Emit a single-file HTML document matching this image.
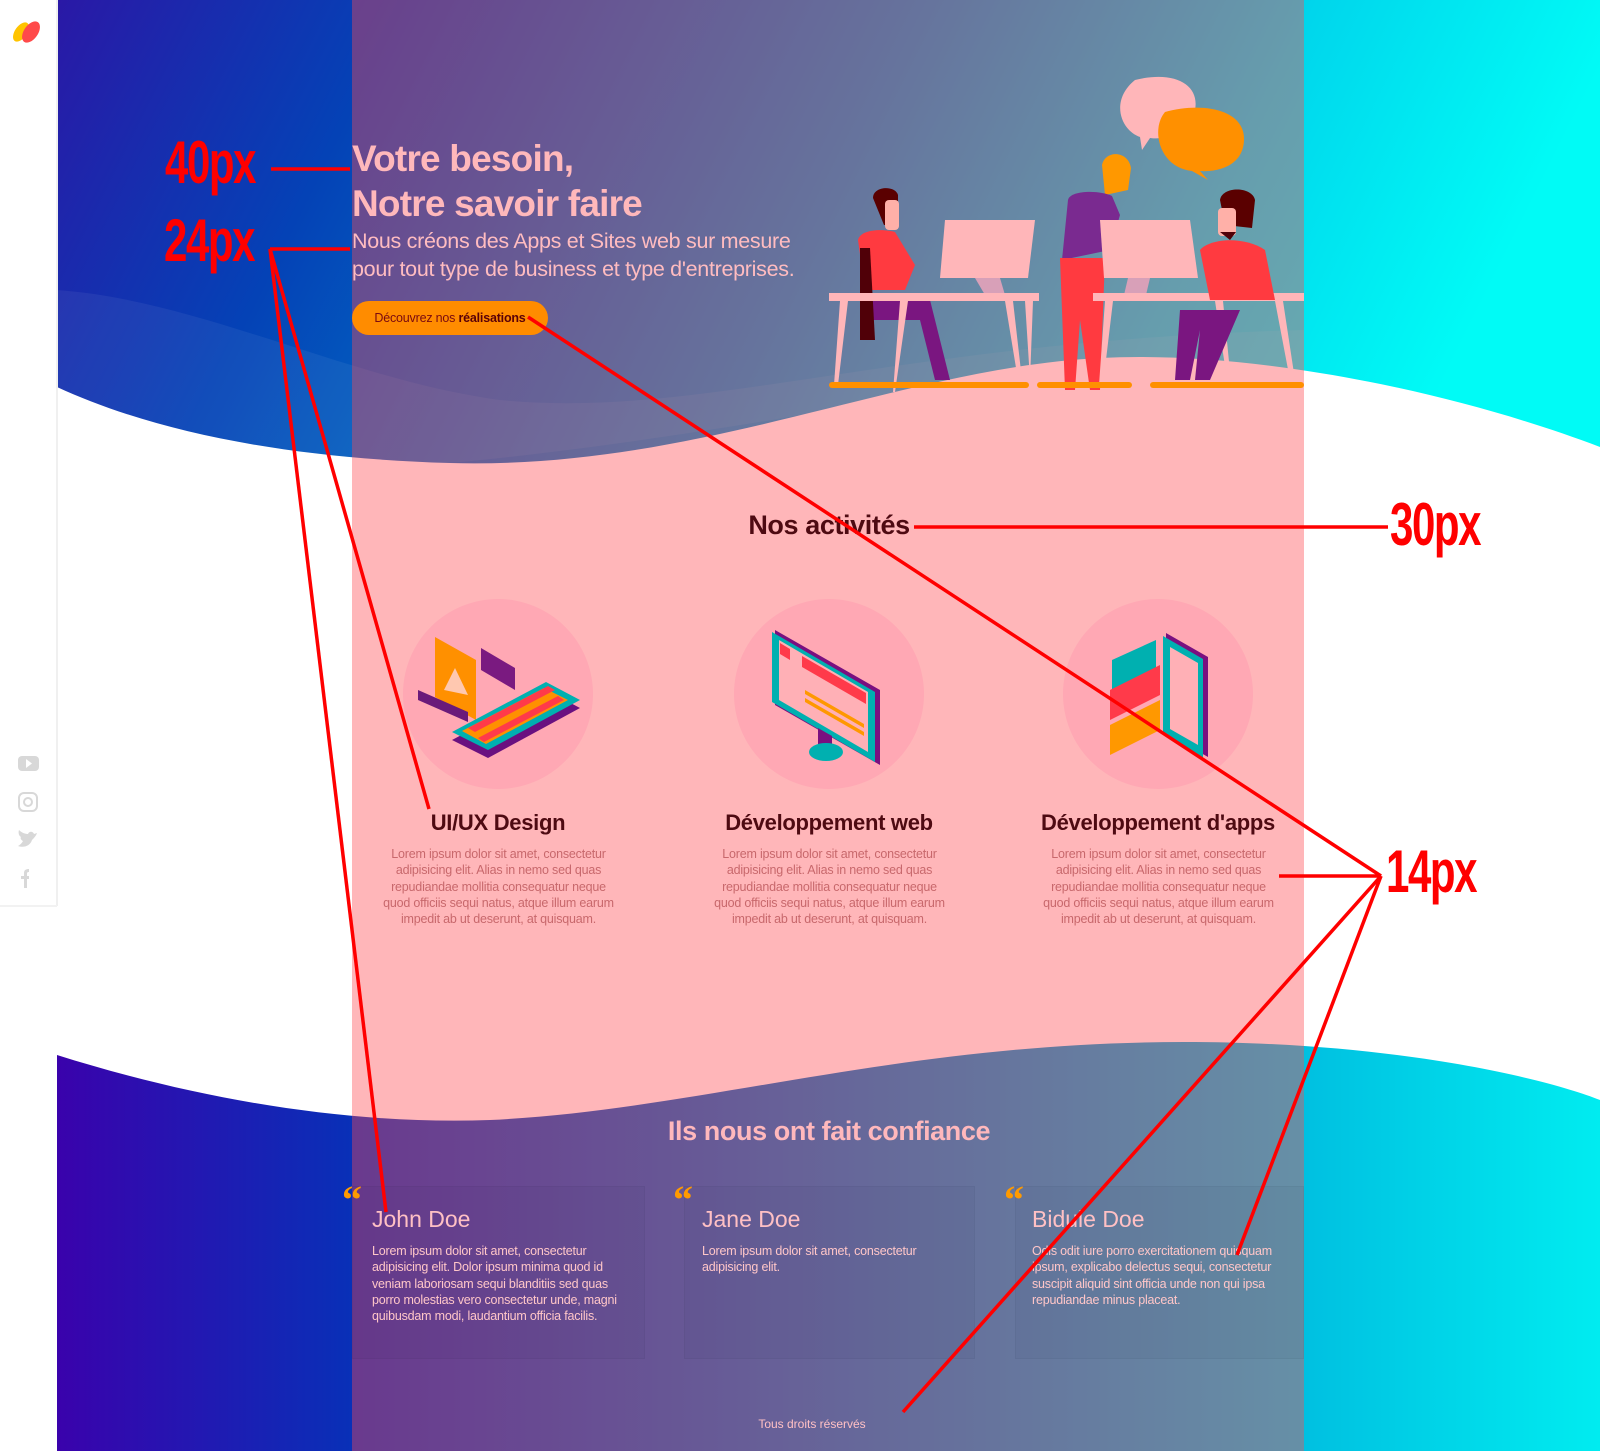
<!DOCTYPE html>
<html><head><meta charset="utf-8"><style>
*{margin:0;padding:0;box-sizing:border-box}
body{width:1600px;height:1451px;position:relative;overflow:hidden;background:#fff;font-family:"Liberation Sans",sans-serif}
.a{position:absolute}
.t{position:absolute;white-space:nowrap}
.desc{position:absolute;width:245px;text-align:center;font-size:12.5px;line-height:16.3px;color:#c8686c;letter-spacing:-0.2px}
.h3{position:absolute;width:330px;text-align:center;font-size:22px;font-weight:bold;color:#4e0a12;letter-spacing:-0.3px}
.card{position:absolute;top:1186px;height:173px;background:rgba(0,0,20,0.03);border:1px solid rgba(0,0,0,0.03)}
.q{position:absolute;top:1176px;font-size:40px;font-family:"Liberation Serif",serif;color:#ff9a00;font-weight:bold}
.nm{position:absolute;top:1206px;font-size:23px;color:#ffc0c4;font-weight:300}
.ct{position:absolute;top:1243px;font-size:12.5px;line-height:16.3px;color:#ffc6c8;letter-spacing:-0.2px}
.ann{position:absolute;color:#f00;font-weight:bold;font-size:60px;transform:scaleX(0.7);transform-origin:left top;letter-spacing:-2px;white-space:nowrap}
</style></head><body>

<svg class="a" style="left:0;top:0" width="1600" height="1451" viewBox="0 0 1600 1451">
<defs>
<linearGradient id="g1" x1="0" y1="0" x2="1" y2="0.15">
<stop offset="0" stop-color="#2a18a6"/><stop offset="0.22" stop-color="#0442b6"/><stop offset="0.55" stop-color="#0090d0"/><stop offset="0.8" stop-color="#00d6ec"/><stop offset="1" stop-color="#00fbf6"/></linearGradient>
<linearGradient id="g2" x1="0" y1="0" x2="1" y2="0">
<stop offset="0" stop-color="#3a02ac"/><stop offset="0.2" stop-color="#0632b8"/><stop offset="0.6" stop-color="#0090d0"/><stop offset="1" stop-color="#00ecf0"/></linearGradient>
</defs>
<path d="M57,0 H1600 V447 C1450,390 1250,350 1100,358 C900,368 700,470 450,463 C280,458 150,430 57,387 Z" fill="url(#g1)"/>
<path d="M57,290 C200,300 350,380 500,400 C700,420 900,340 1304,330 L1304,370 C1000,360 800,430 450,463 C280,458 150,430 57,387 Z" fill="#fff" opacity="0.06"/>
<path d="M57,1055 C200,1100 350,1125 490,1120 C700,1110 900,1042 1184,1042 C1400,1042 1550,1080 1600,1100 V1451 H57 Z" fill="url(#g2)"/>
<rect x="352" y="0" width="952" height="1451" fill="rgb(255,72,80)" opacity="0.4"/>
<rect x="0" y="0" width="57" height="906" fill="#fff"/>
<rect x="56" y="0" width="2" height="906" fill="#f0f0f0"/>
<rect x="0" y="905" width="57" height="2" fill="#f2f2f2"/>
<ellipse cx="21" cy="32" rx="6" ry="11" transform="rotate(35 21 32)" fill="#ffc400"/>
<ellipse cx="31" cy="32" rx="7" ry="12" transform="rotate(35 31 32)" fill="#ff4a4a"/>
<rect x="18" y="756" width="21" height="15" rx="4" fill="#d8d8d8"/><path d="M26,759 L32,763.5 L26,768 Z" fill="#fff"/>
<rect x="19" y="793" width="18" height="18" rx="5" fill="none" stroke="#d8d8d8" stroke-width="2"/><circle cx="28" cy="802" r="4" fill="none" stroke="#d8d8d8" stroke-width="2"/>
<path d="M18,846 C24,848 30,846 32,840 C34,838 36,836 37,833 L34,834 C33,831 29,831 28,834 C24,834 21,832 19,830 C18,833 19,836 21,837 C20,838 21,840 23,841 C22,843 20,845 18,846 Z" fill="#d8d8d8"/>
<path d="M24,888 V879 H21 V876 H24 V873 C24,870 26,869 29,869 V872 C27,872 27,873 27,874 V876 H29 L29,879 H27 V888 Z" fill="#d8d8d8"/>
<circle cx="498" cy="694" r="95" fill="#ffa8b4"/>
<circle cx="829" cy="694" r="95" fill="#ffa8b4"/>
<circle cx="1158" cy="694" r="95" fill="#ffa8b4"/>
<path d="M435,637 L476,660 L476,720 L435,697 Z" fill="#ff9000"/>
<path d="M444,690 L455,668 L468,695 Z" fill="#ffc8b0"/>
<path d="M481,648 L515,668 L515,690 L481,670 Z" fill="#7a1a80"/>
<path d="M418,690 L468,712 L468,722 L418,700 Z" fill="#6a1a7a"/>
<path d="M452,740 L546,690 L580,708 L488,758 Z" fill="#6a1080"/>
<path d="M452,732 L546,682 L580,700 L488,750 Z" fill="#00b0b0"/>
<path d="M462,731 L544,688 L568,700 L486,744 Z" fill="#ff9000"/>
<path d="M468,728 L548,686 L555,690 L475,732 Z M478,738 L558,696 L564,700 L484,742 Z" fill="#ff3a4a"/>
<path d="M775,630 L880,690 L880,765 L775,705 Z" fill="#7a1080"/>
<path d="M772,632 L875,692 L875,762 L772,702 Z" fill="#00b0b0"/>
<path d="M779,640 L868,692 L868,752 L779,700 Z" fill="#ffb0b6"/>
<path d="M780,643 L790,649 L790,660 L780,654 Z M802,656 L866,693 L866,704 L802,667 Z" fill="#ff3a4a"/>
<path d="M805,690 L864,724 L864,728 L805,694 Z M805,698 L864,732 L864,736 L805,702 Z" fill="#ff9800"/>
<path d="M818,728 L832,736 L832,752 L818,744 Z" fill="#7a1080"/>
<ellipse cx="826" cy="752" rx="17" ry="9" fill="#00b0b0"/>
<path d="M1166,633 L1208,657 L1208,757 L1166,733 Z" fill="#7a1080"/>
<path d="M1163,636 L1203,659 L1203,758 L1163,735 Z" fill="#00b0b0"/>
<path d="M1170,647 L1198,663 L1198,745 L1170,729 Z" fill="#ffb0b6"/>
<path d="M1112,660 L1156,640 L1156,668 L1112,690 Z" fill="#00b0b0"/>
<path d="M1110,690 L1160,665 L1160,695 L1110,720 Z" fill="#ff3a4a"/>
<path d="M1110,725 L1160,700 L1160,730 L1110,755 Z" fill="#ff9800"/>
<path d="M1135,80 C1175,70 1200,85 1195,110 C1190,135 1160,140 1150,138 L1142,150 L1140,137 C1120,130 1110,100 1135,80 Z" fill="#ffb6b9"/>
<path d="M1165,112 C1200,102 1245,108 1244,140 C1243,170 1210,172 1200,171 L1208,180 L1192,171 C1160,168 1150,130 1165,112 Z" fill="#ff9000"/>
<path d="M873,198 C873,186 895,185 898,195 L898,225 L884,225 Z" fill="#5a0000"/>
<rect x="885" y="200" width="14" height="30" rx="4" fill="#ffb0a8"/>
<path d="M858,240 C860,230 880,228 895,232 L915,265 L905,290 L865,290 Z" fill="#ff3a40"/>
<path d="M864,300 L930,300 L950,380 L935,380 L920,320 L870,320 Z" fill="#7a1680"/>
<path d="M860,248 L870,248 L875,340 L860,340 Z" fill="#500008"/>
<path d="M945,220 L1035,220 L1028,278 L940,278 Z" fill="#ffb6b9"/>
<path d="M975,278 L1000,278 L1005,295 L985,295 Z" fill="#d8a0b8"/>
<rect x="829" y="293" width="210" height="8" fill="#ffb6b9"/>
<path d="M840,301 L848,301 L838,385 L834,385 Z M1005,301 L1013,301 L1022,380 L1018,380 Z M900,301 L908,301 L895,392 L893,392 Z M1025,301 L1033,301 L1030,380 Z" fill="#ffb6b9"/>
<path d="M1102,165 C1105,150 1128,150 1131,168 L1128,190 L1105,195 Z" fill="#ff9800"/>
<path d="M1068,200 C1070,190 1100,190 1112,196 L1120,215 L1110,250 L1062,260 Z" fill="#7a2a90"/>
<path d="M1060,258 L1105,258 L1100,390 L1090,390 L1080,320 L1075,390 L1065,390 Z" fill="#ff3a40"/>
<path d="M1100,220 L1190,220 L1198,278 L1104,278 Z" fill="#ffb6b9"/>
<path d="M1128,278 L1150,278 L1146,295 L1124,295 Z" fill="#d8a0b8"/>
<rect x="1093" y="293" width="211" height="8" fill="#ffb6b9"/>
<path d="M1105,301 L1113,301 L1103,385 L1099,385 Z M1275,301 L1283,301 L1295,380 L1290,380 Z M1215,301 L1223,301 L1232,392 L1229,392 Z" fill="#ffb6b9"/>
<path d="M1220,200 C1222,186 1252,186 1255,200 L1252,228 L1225,225 Z" fill="#5a0000"/>
<rect x="1218" y="208" width="18" height="28" rx="4" fill="#ffb0a8"/>
<path d="M1220,232 L1236,232 L1230,240 Z" fill="#500008"/>
<path d="M1200,250 C1210,238 1245,236 1265,250 L1275,300 L1210,300 Z" fill="#ff3a40"/>
<path d="M1180,310 L1240,310 L1210,380 L1195,380 L1200,330 L1190,380 L1175,380 Z" fill="#7a1680"/>
<rect x="829" y="382" width="200" height="6" rx="3" fill="#ff9000"/>
<rect x="1037" y="382" width="95" height="6" rx="3" fill="#ff9000"/>
<rect x="1150" y="382" width="154" height="6" rx="3" fill="#ff9000"/>
</svg>

<div class="t" style="left:352px;top:136px;font-size:37px;font-weight:bold;color:#ffb8bb;line-height:45px;letter-spacing:-0.8px">Votre besoin,<br>Notre savoir faire</div>
<div class="t" style="left:352px;top:227px;font-size:21.5px;color:#ffbcc0;line-height:28px;letter-spacing:-0.3px">Nous créons des Apps et Sites web sur mesure<br>pour tout type de business et type d'entreprises.</div>
<div class="a" style="left:352px;top:301px;width:196px;height:34px;border-radius:17px;background:#ff8c00;color:#7a0a10;font-size:12.5px;line-height:34px;text-align:center;letter-spacing:-0.2px">Découvrez nos <b style="color:#5a0008">réalisations</b></div>

<div class="t" style="left:0;width:1658px;text-align:center;top:510px;font-size:27px;font-weight:bold;color:#4e0a12;letter-spacing:-0.4px">Nos activités</div>

<div class="h3" style="left:333px;top:810px">UI/UX Design</div>
<div class="h3" style="left:664px;top:810px">Développement web</div>
<div class="h3" style="left:993px;top:810px">Développement d'apps</div>
<div class="desc" style="left:376px;top:846px">Lorem ipsum dolor sit amet, consectetur adipisicing elit. Alias in nemo sed quas repudiandae mollitia consequatur neque quod officiis sequi natus, atque illum earum impedit ab ut deserunt, at quisquam.</div>
<div class="desc" style="left:707px;top:846px">Lorem ipsum dolor sit amet, consectetur adipisicing elit. Alias in nemo sed quas repudiandae mollitia consequatur neque quod officiis sequi natus, atque illum earum impedit ab ut deserunt, at quisquam.</div>
<div class="desc" style="left:1036px;top:846px">Lorem ipsum dolor sit amet, consectetur adipisicing elit. Alias in nemo sed quas repudiandae mollitia consequatur neque quod officiis sequi natus, atque illum earum impedit ab ut deserunt, at quisquam.</div>

<div class="t" style="left:0;width:1658px;text-align:center;top:1116px;font-size:27px;font-weight:bold;color:#ffb8bc;letter-spacing:-0.4px">Ils nous ont fait confiance</div>

<div class="card" style="left:352px;width:293px"></div>
<div class="card" style="left:684px;width:291px"></div>
<div class="card" style="left:1015px;width:289px"></div>
<div class="q" style="left:342px">“</div>
<div class="q" style="left:673px">“</div>
<div class="q" style="left:1004px">“</div>
<div class="nm" style="left:372px">John Doe</div>
<div class="nm" style="left:702px">Jane Doe</div>
<div class="nm" style="left:1032px">Bidule Doe</div>
<div class="ct" style="left:372px;width:245px">Lorem ipsum dolor sit amet, consectetur adipisicing elit. Dolor ipsum minima quod id veniam laboriosam sequi blanditiis sed quas porro molestias vero consectetur unde, magni quibusdam modi, laudantium officia facilis.</div>
<div class="ct" style="left:702px;width:235px">Lorem ipsum dolor sit amet, consectetur adipisicing elit.</div>
<div class="ct" style="left:1032px;width:248px">Odis odit iure porro exercitationem quisquam ipsum, explicabo delectus sequi, consectetur suscipit aliquid sint officia unde non qui ipsa repudiandae minus placeat.</div>

<div class="t" style="left:0;width:1624px;text-align:center;top:1417px;font-size:12px;color:#ffc0c4">Tous droits réservés</div>

<svg class="a" style="left:0;top:0" width="1600" height="1451">
<g stroke="#f00" stroke-width="3.5" fill="none">
<path d="M271,169 H350"/>
<path d="M270,249 H350"/>
<path d="M270,249 L429,809"/>
<path d="M270,249 L386,1212"/>
<path d="M528,317 L1381,876"/>
<path d="M914,527 H1388"/>
<path d="M1279,876 H1381"/>
<path d="M1381,876 L1237,1255"/>
<path d="M1381,876 L903,1412"/>
</g>
</svg>
<div class="ann" style="left:165px;top:128px">40px</div>
<div class="ann" style="left:164px;top:206px">24px</div>
<div class="ann" style="left:1390px;top:490px">30px</div>
<div class="ann" style="left:1386px;top:837px">14px</div>
</body></html>
